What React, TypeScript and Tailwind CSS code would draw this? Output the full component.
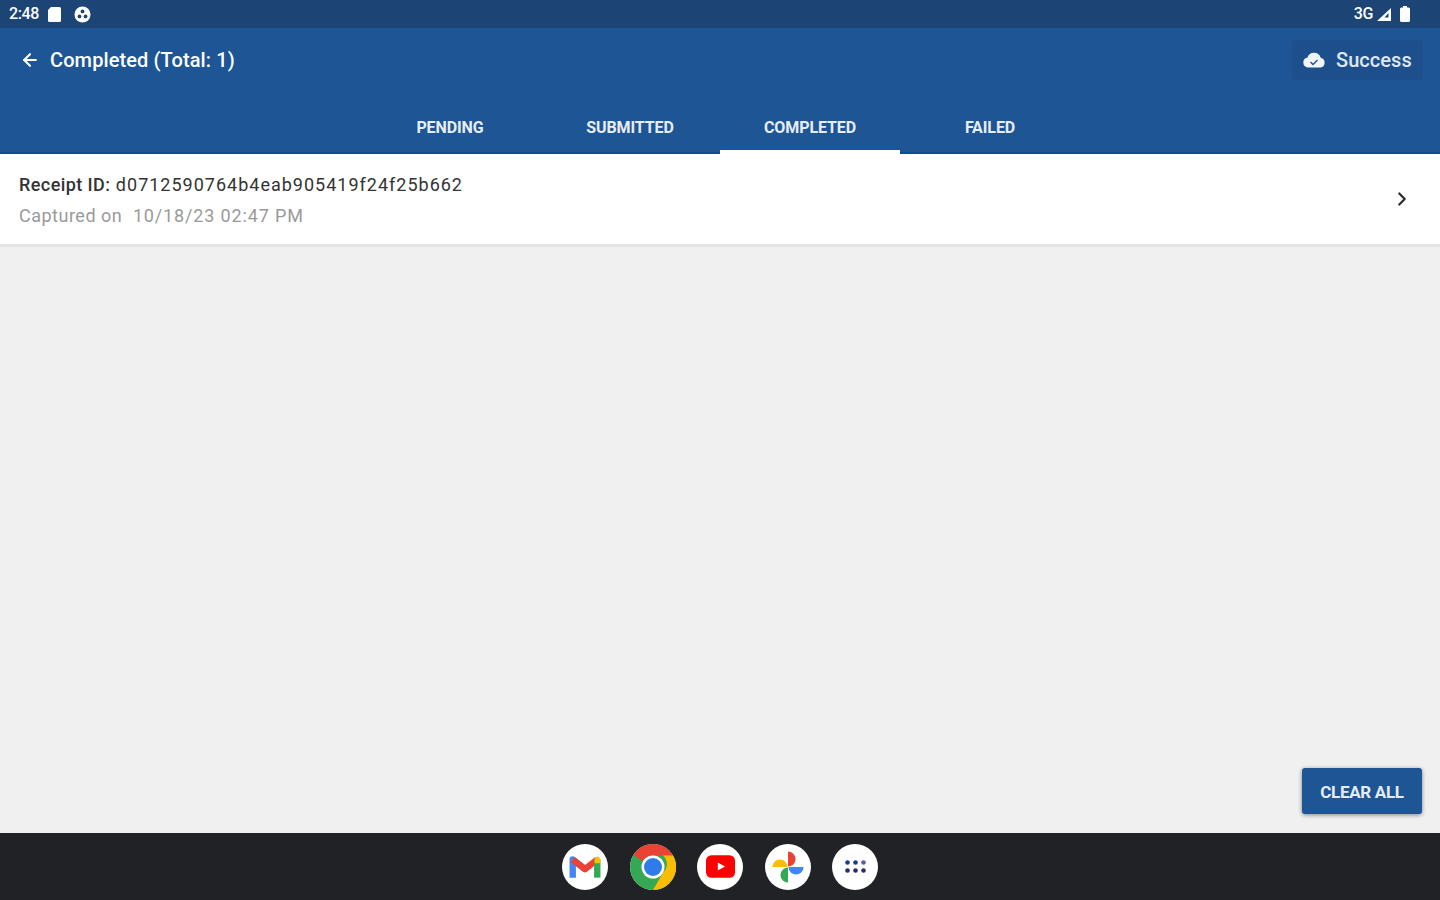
import React from "react";
import { ArrowLeft, ChevronRight } from "lucide-react";

const tabs = ["PENDING", "SUBMITTED", "COMPLETED", "FAILED"];

function DockIcon({ children }: { children: React.ReactNode }) {
  return (
    <div className="flex h-[46px] w-[46px] items-center justify-center rounded-full bg-white">
      {children}
    </div>
  );
}

export default function App() {
  return (
    <div className="flex h-[900px] w-[1440px] flex-col overflow-hidden bg-[#f0f0f0] font-['Roboto',sans-serif]">
      {/* Status bar */}
      <div className="flex h-7 items-center justify-between bg-[#1c4474] pl-[9px] pr-[29px] text-white">
        <div className="flex items-center">
          <span className="text-[16px] font-medium tracking-[-0.4px]">2:48</span>
          <svg width="15" height="16" viewBox="0 0 14 16" fill="white" className="ml-[8px]">
            <path d="M3.500 1H12a1.500 1.500 0 0 1 1.500 1.500v12A1.500 1.500 0 0 1 12 16H2a1.500 1.500 0 0 1-1.500-1.500V4z" />
          </svg>
          <svg width="17" height="17" viewBox="0 0 18 18" className="ml-[12px]">
            <circle cx="9" cy="9" r="8.500" fill="white" />
            <circle cx="9" cy="5.800" r="2" fill="#1c4474" />
            <circle cx="5.800" cy="11" r="2" fill="#1c4474" />
            <circle cx="12.200" cy="11" r="2" fill="#1c4474" />
          </svg>
        </div>
        <div className="flex items-center gap-[3px]">
          <span className="text-[16px] font-medium tracking-[-0.4px]">3G</span>
          <svg width="16" height="14" viewBox="0 0 16 14" fill="white">
            <path d="M15 1v13H1zM12.500 6l-4 4.500h4z" fillRule="evenodd" />
          </svg>
          <svg width="12" height="16" viewBox="0 0 12 16" fill="white" className="ml-[4px]">
            <path d="M4 0h4v1.500h1.500A1.500 1.500 0 0 1 11 3v11.500a1.500 1.500 0 0 1-1.500 1.500h-7A1.500 1.500 0 0 1 1 14.500V3a1.500 1.500 0 0 1 1.500-1.500H4z" />
          </svg>
        </div>
      </div>

      {/* Header */}
      <div className="bg-[#1d5595]">
        <div className="flex h-16 items-center justify-between pl-5 pr-[17px] text-white">
          <div className="flex items-center gap-[10px]">
            <ArrowLeft size={20} strokeWidth={2.5} />
            <span className="text-[20px] font-medium tracking-[0.1px]">Completed (Total: 1)</span>
          </div>
          <div className="flex h-10 w-[131px] items-center gap-[10px] rounded-[3px] bg-[#1c4f8b] pl-[10px]">
            <svg width="24" height="18" viewBox="0 0 24 18" fill="#f1f4f8">
              <path d="M6 16.500a5 5 0 0 1-.6-9.900A7 7 0 0 1 18.700 6.700 5 5 0 0 1 18.500 16.500z" />
              <path d="M8.500 11l2.500 2.500 4.500-4.500" fill="none" stroke="#1c4f8b" strokeWidth="1.300" />
            </svg>
            <span className="text-[20px] font-medium tracking-[0.05px] text-[#dfe6f0]">Success</span>
          </div>
        </div>
        <div className="flex h-[62px] justify-center border-b-[2px] border-[#0f4c93]">
          {tabs.map((t) => (
            <div
              key={t}
              className={`flex h-[62px] w-[180px] items-start justify-center pt-[24px] text-[16px] font-bold tracking-[-0.1px] text-[#e8edf4] ${
                t === "COMPLETED" ? "border-b-[4px] border-white" : ""
              }`}
            >
              {t}
            </div>
          ))}
        </div>
      </div>

      {/* Body */}
      <div className="relative flex flex-1 flex-col">
        <div className="flex h-[93px] items-center justify-between border-b-[3px] border-[#e4e4e4] bg-white pl-[19px] pr-[27px]">
          <div className="flex flex-col gap-[9px] pt-[3px]">
            <div className="text-[18px] leading-[22px] tracking-[1px] text-[#333333]">
              <span className="font-medium tracking-[0.42px]">Receipt ID:</span> d0712590764b4eab905419f24f25b662
            </div>
            <div className="whitespace-pre text-[18px] leading-[22px] tracking-[0.85px] text-[#9a9a9a]">
              <span className="tracking-[0.5px]">Captured on</span>{"  "}10/18/23 02:47 PM
            </div>
          </div>
          <ChevronRight size={22} strokeWidth={2.4} className="text-[#2a2a2a]" />
        </div>
        <button className="absolute bottom-[19px] right-[18px] flex h-[46px] w-[120px] items-center justify-center rounded-[3px] bg-[#1d5595] pt-[3px] text-[17px] font-bold tracking-[-0.3px] text-[#e6ebf3] shadow-[0_1px_4px_rgba(0,0,0,0.45)]">
          CLEAR ALL
        </button>
      </div>

      {/* Dock */}
      <div className="flex h-[67px] items-center justify-center gap-[21.500px] bg-[#212226]">
        <DockIcon>
          <svg width="32" height="26" viewBox="0 0 30 24" fill="none">
            <path d="M3.500 22V5L15 14" stroke="#4285f4" strokeWidth="6" strokeLinejoin="round" />
            <path d="M3.500 5L15 14 26.500 5" stroke="#ea4335" strokeWidth="6" strokeLinejoin="round" />
            <path d="M26.500 22V5" stroke="#34a853" strokeWidth="6" />
            <path d="M24 3.500l3-1.500 2.500 2.500v4h-5.500z" fill="#fbbc04" />
          </svg>
        </DockIcon>
        <DockIcon>
          <svg width="46" height="46" viewBox="0 0 46 46">
            <circle cx="23" cy="23" r="23" fill="#34a853" />
            <path d="M23 0a23 23 0 0 1 20 11.500H23a11.500 11.500 0 0 0-10 6L3.500 11A23 23 0 0 1 23 0z" fill="#ea4335" />
            <path d="M43 11.500A23 23 0 0 1 23 46l10-17.300a11.500 11.500 0 0 0 0-17.200z" fill="#fbbc04" />
            <circle cx="23" cy="23" r="11.500" fill="white" />
            <circle cx="23" cy="23" r="9" fill="#2f7bea" />
          </svg>
        </DockIcon>
        <DockIcon>
          <svg width="29" height="23" viewBox="0 0 32 25">
            <rect width="32" height="25" rx="6" fill="#ff0000" />
            <path d="M13 8l8 4.500-8 4.500z" fill="white" />
          </svg>
        </DockIcon>
        <DockIcon>
          <svg width="34" height="34" viewBox="0 0 36 36">
            <path d="M18 17.500V1.500a8 8 0 0 1 0 16z" fill="#ea4335" />
            <path d="M18.500 18H34.500a8 8 0 0 1-16 0z" fill="#4285f4" />
            <path d="M18 18.500V34.500a8 8 0 0 1 0-16z" fill="#34a853" />
            <path d="M17.500 18H1.500a8 8 0 0 1 16 0z" fill="#fbbc04" />
          </svg>
        </DockIcon>
        <DockIcon>
          <div className="grid grid-cols-3 gap-x-[3px] gap-y-[3px]">
            {["#1a3a8f", "#1a3a8f", "#5a5aa0", "#2b2b6b", "#2b2b6b", "#2b2b6b"].map((c, i) => (
              <svg key={i} width="5" height="5" viewBox="0 0 5 5">
                <circle cx="2.500" cy="2.500" r="2.300" fill={c} />
              </svg>
            ))}
          </div>
        </DockIcon>
      </div>
    </div>
  );
}
